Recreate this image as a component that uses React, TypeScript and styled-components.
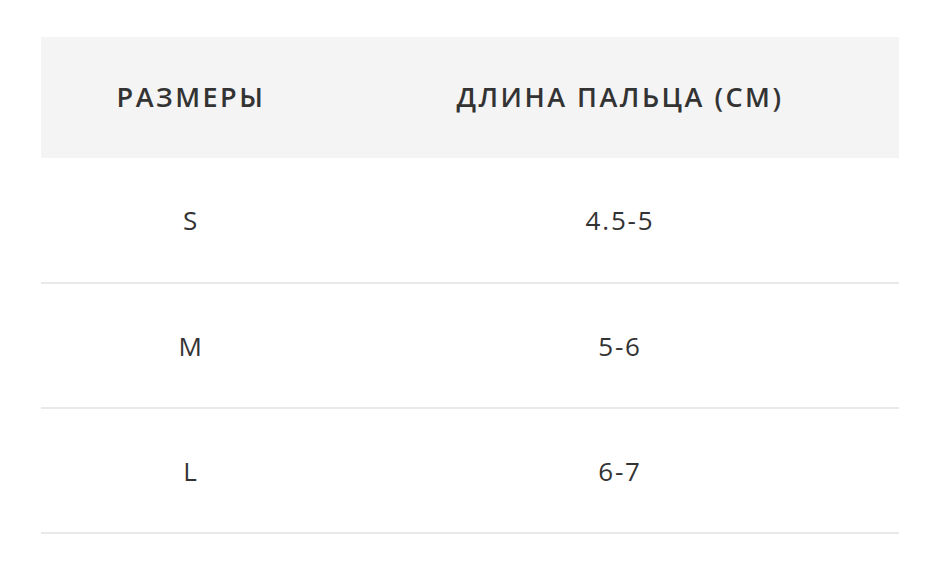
import { FC } from "react";
import styled, { createGlobalStyle } from "styled-components";

const sizes = [
  { size: "S", length: "4.5-5" },
  { size: "M", length: "5-6" },
  { size: "L", length: "6-7" },
];

const GlobalStyle = createGlobalStyle`
  html, body {
    margin: 0;
    background: #ffffff;
  }
  body {
    font-family: "Open Sans", "Noto Sans", sans-serif;
    color: #333333;
  }
`;

const App: FC = () => (
  <Page>
    <GlobalStyle />
    <Table>
      <thead>
        <HeadRow>
          <HeadCell $first>РАЗМЕРЫ</HeadCell>
          <HeadCell>ДЛИНА ПАЛЬЦА (СМ)</HeadCell>
        </HeadRow>
      </thead>
      <tbody>
        {sizes.map((row) => (
          <BodyRow key={row.size}>
            <Cell $first>{row.size}</Cell>
            <Cell>{row.length}</Cell>
          </BodyRow>
        ))}
      </tbody>
    </Table>
  </Page>
);

export default App;

const Page = styled.div`
  padding: 37px 45px 0 41px;
`;

const Table = styled.table`
  width: 858px;
  border-collapse: collapse;
  table-layout: fixed;
`;

const HeadRow = styled.tr`
  height: 121px;
  background: #f4f4f4;
`;

const HeadCell = styled.th<{ $first?: boolean }>`
  width: ${(p) => (p.$first ? "300px" : "auto")};
  padding: 0 0 3px;
  text-align: center;
  font-size: 27px;
  font-weight: 600;
  letter-spacing: 2.5px;
  color: #333333;
`;

const BodyRow = styled.tr`
  height: 125px;
  border-bottom: 2px solid #e9e9e9;
`;

const Cell = styled.td<{ $first?: boolean }>`
  width: ${(p) => (p.$first ? "300px" : "auto")};
  padding: 0;
  text-align: center;
  font-size: 26px;
  font-weight: 400;
  letter-spacing: 1.8px;
  color: #333333;
`;
